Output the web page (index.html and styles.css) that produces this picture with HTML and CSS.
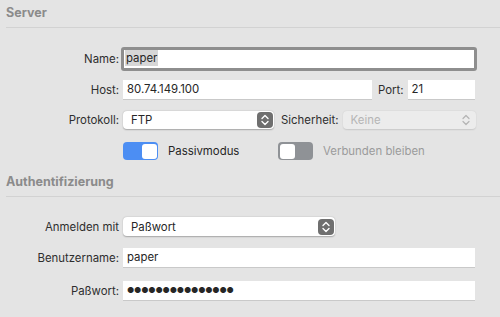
FILE: index.html
```html
<!DOCTYPE html>
<html lang="de">
<head>
    <meta charset="UTF-8">
    <meta name="viewport" content="width=device-width, initial-scale=1.0">
    <title>Server-Einstellungen</title>
    <link rel="stylesheet" href="styles.css">
</head>
<body>
    <section class="group">
        <h2 class="group-title">Server</h2>

        <div class="form">
            <div class="row row-name">
                <span class="label">Name:</span>
                <div class="field field-focus"><span class="selected">paper</span></div>
            </div>

            <div class="row row-host">
                <span class="label">Host:</span>
                <div class="field field-host">80.74.149.100</div>
                <span class="label-inline">Port:</span>
                <div class="field field-port">21</div>
            </div>

            <div class="row row-proto">
                <span class="label">Protokoll:</span>
                <div class="popup popup-proto">
                    <span>FTP</span>
                    <span class="stepper">
                        <svg width="8" height="12" viewBox="0 0 8 12"><path d="M1 4.5 L4 1.5 L7 4.5 M1 7.5 L4 10.5 L7 7.5" fill="none" stroke="#fff" stroke-width="1.4" stroke-linecap="round" stroke-linejoin="round"/></svg>
                    </span>
                </div>
                <span class="label-inline">Sicherheit:</span>
                <div class="popup popup-disabled">
                    <span>Keine</span>
                    <svg class="chevrons" width="8" height="12" viewBox="0 0 8 12"><path d="M1 4.5 L4 1.5 L7 4.5 M1 7.5 L4 10.5 L7 7.5" fill="none" stroke="#b4b4b4" stroke-width="1.2" stroke-linecap="round" stroke-linejoin="round"/></svg>
                </div>
            </div>

            <div class="row row-toggles">
                <span class="label"></span>
                <div class="switch switch-on"><span class="knob"></span></div>
                <span class="switch-text">Passivmodus</span>
                <div class="switch switch-off"><span class="knob"></span></div>
                <span class="switch-text switch-text-off">Verbunden bleiben</span>
            </div>
        </div>
    </section>

    <section class="group group-auth">
        <h2 class="group-title group-title-auth">Authentifizierung</h2>

        <div class="form">
            <div class="row row-login">
                <span class="label">Anmelden mit</span>
                <div class="popup popup-login">
                    <span>Paßwort</span>
                    <span class="stepper">
                        <svg width="8" height="12" viewBox="0 0 8 12"><path d="M1 4.5 L4 1.5 L7 4.5 M1 7.5 L4 10.5 L7 7.5" fill="none" stroke="#fff" stroke-width="1.4" stroke-linecap="round" stroke-linejoin="round"/></svg>
                    </span>
                </div>
            </div>

            <div class="row row-user">
                <span class="label">Benutzername:</span>
                <div class="field field-wide">paper</div>
            </div>

            <div class="row row-pass">
                <span class="label">Paßwort:</span>
                <div class="field field-wide field-dots">●●●●●●●●●●●●●●●</div>
            </div>
        </div>
    </section>
</body>
</html>
```

FILE: styles.css
```css
:root {
    --bg: #e4e4e4;
    --text: #262626;
    --muted: #8b8b8b;
    --line: #d2d2d2;
    --blue: #4c8ef3;
}

body {
    margin: 0;
    background-color: var(--bg);
    font-family: 'Inter', 'Liberation Sans', sans-serif;
    font-size: 11.4px;
    color: var(--text);
    width: 500px;
    height: 317px;
    overflow: hidden;
}

.group-title {
    margin: 0 0 0 6px;
    padding-top: 5px;
    height: 22px;
    font-size: 12.5px;
    font-weight: 700;
    color: var(--muted);
    border-bottom: 1px solid var(--line);
    line-height: 16px;
}

.group-title-auth {
    padding-top: 14px;
    height: 22px;
}

.form {
    padding-top: 19px;
}

.group-auth .form {
    padding-top: 20px;
}

.row {
    display: flex;
    align-items: center;
}

.label {
    width: 119px;
    flex-shrink: 0;
    text-align: right;
    margin-right: 4px;
    color: #2e2e2e;
}

.label-inline {
    margin: 0 4px 0 6px;
    color: #2e2e2e;
}

.field {
    box-sizing: border-box;
    height: 19px;
    background: #fff;
    box-shadow: 0 1px 0 #c9c9c9;
    padding: 0 4px;
    line-height: 19px;
    white-space: nowrap;
    overflow: hidden;
}

/* name field with focus ring */
.row-name {
    height: 24px;
    margin-bottom: 9px;
}

.label + .field-focus {
    margin-left: -2px;
}

.field-focus {
    width: 356px;
    height: 24px;
    border: 3px solid #8e8e8e;
    border-radius: 3px;
    box-shadow: none;
    padding: 0 1px;
    line-height: 17px;
}

.selected {
    background: #d7d7d7;
    padding: 1px 1px;
}

.row-host {
    margin-bottom: 12px;
}

.field-host {
    width: 249px;
}

.row-host .label-inline {
    margin-left: 6px;
    margin-right: 4px;
}

.field-port {
    width: 67px;
}

/* popups */
.popup {
    box-sizing: border-box;
    display: flex;
    align-items: center;
    justify-content: space-between;
    height: 18px;
    background: #fff;
    border-radius: 4px;
    box-shadow: 0 0.5px 1.5px rgba(0, 0, 0, 0.28);
    padding: 0 1px 0 8px;
}

.stepper {
    display: flex;
    align-items: center;
    justify-content: center;
    width: 16px;
    height: 16px;
    background: #6f6f6f;
    border-radius: 4px;
}

.row-proto {
    margin-bottom: 13px;
}

.popup-proto {
    width: 151px;
}

.row-proto .label-inline {
    margin-left: 7px;
    margin-right: 4px;
}

.popup-disabled {
    width: 133px;
    background: #ececec;
    color: #b5b5b5;
    box-shadow: 0 0.5px 1.5px rgba(0, 0, 0, 0.12);
    padding-right: 6px;
}

/* switches */
.row-toggles {
    height: 18px;
}

.switch {
    box-sizing: border-box;
    display: flex;
    width: 35px;
    height: 18px;
    border-radius: 4px;
    padding: 1.5px 1.5px;
}

.switch-on {
    background: var(--blue);
    justify-content: flex-end;
}

.switch-off {
    background: #8f9296;
    justify-content: flex-start;
}

.knob {
    width: 15px;
    height: 15px;
    background: #fff;
    border-radius: 3px;
}

.switch-text {
    margin-left: 10px;
    width: 110px;
}

.switch-text-off {
    color: #9b9b9b;
}

/* auth */
.row-login {
    margin-bottom: 12px;
}

.popup-login {
    width: 212px;
    height: 19px;
}

.row-user {
    margin-bottom: 14px;
}

.field-wide {
    width: 352px;
}

.field-dots {
    font-size: 8px;
    letter-spacing: -0.2px;
    padding-left: 4px;
}
```
